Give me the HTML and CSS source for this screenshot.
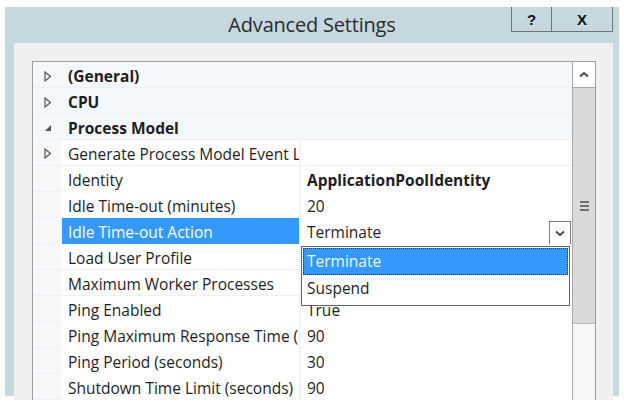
FILE: index.html
```html
<!DOCTYPE html>
<html>
<head>
<meta charset="utf-8">
<link rel="stylesheet" href="styles.css">
</head>
<body>
<div class="window">
  <div class="titlebar">
    <div class="title">Advanced Settings</div>
    <div class="tbuttons">
      <div class="tbtn help">?</div>
      <div class="tbtn close">X</div>
    </div>
  </div>
  <div class="panel">
    <div class="grid">
      <div class="rows">
        <div class="row cat"><span class="exp"><svg width="8" height="11" viewBox="0 0 8 11"><path d="M1 1 L6.5 5.5 L1 10 Z" fill="none" stroke="#555" stroke-width="1.2"/></svg></span><span class="catname">(General)</span></div>
        <div class="row cat"><span class="exp"><svg width="8" height="11" viewBox="0 0 8 11"><path d="M1 1 L6.5 5.5 L1 10 Z" fill="none" stroke="#555" stroke-width="1.2"/></svg></span><span class="catname">CPU</span></div>
        <div class="row cat"><span class="exp"><svg width="8" height="8" viewBox="0 0 8 8"><path d="M7 1 L7 7 L1 7 Z" fill="#555"/></svg></span><span class="catname">Process Model</span></div>
        <div class="row"><span class="exp"><svg width="8" height="11" viewBox="0 0 8 11"><path d="M1 1 L6.5 5.5 L1 10 Z" fill="none" stroke="#555" stroke-width="1.2"/></svg></span><span class="name">Generate Process Model Event L</span><span class="val"></span></div>
        <div class="row"><span class="exp"></span><span class="name">Identity</span><span class="val bold">ApplicationPoolIdentity</span></div>
        <div class="row"><span class="exp"></span><span class="name">Idle Time-out (minutes)</span><span class="val">20</span></div>
        <div class="row"><span class="exp"></span><span class="name sel">Idle Time-out Action</span><span class="val edit">Terminate<span class="ddbtn"><svg width="10" height="7" viewBox="0 0 10 7"><path d="M1 1.5 L5 5 L9 1.5" fill="none" stroke="#444" stroke-width="2"/></svg></span></span></div>
        <div class="row"><span class="exp"></span><span class="name">Load User Profile</span><span class="val"></span></div>
        <div class="row"><span class="exp"></span><span class="name">Maximum Worker Processes</span><span class="val"></span></div>
        <div class="row"><span class="exp"></span><span class="name">Ping Enabled</span><span class="val">True</span></div>
        <div class="row"><span class="exp"></span><span class="name">Ping Maximum Response Time (</span><span class="val">90</span></div>
        <div class="row"><span class="exp"></span><span class="name">Ping Period (seconds)</span><span class="val">30</span></div>
        <div class="row"><span class="exp"></span><span class="name">Shutdown Time Limit (seconds)</span><span class="val">90</span></div>
      </div>
      <div class="scrollbar">
        <div class="sbup"><svg width="10" height="7" viewBox="0 0 10 7"><path d="M1 5.5 L5 2 L9 5.5" fill="none" stroke="#444" stroke-width="2"/></svg></div>
        <div class="thumb"><span class="grip"></span><span class="grip"></span><span class="grip"></span></div>
        <div class="track"></div>
      </div>
      <div class="dropdown">
        <div class="opt active">Terminate</div>
        <div class="opt">Suspend</div>
      </div>
    </div>
  </div>
</div>
</body>
</html>
```
FILE: styles.css
```css
html, body {
  margin: 0;
  padding: 0;
  background: #ffffff;
}
body {
  width: 624px;
  height: 402px;
  overflow: hidden;
  font-family: "Open Sans", "Noto Sans", "DejaVu Sans", sans-serif;
}
.window {
  margin: 7px 0 0 5px;
  width: 614px;
  height: 389px;
  background: #c5d8de;
  display: flex;
  flex-direction: column;
}
.titlebar {
  height: 37px;
  position: relative;
  display: flex;
  justify-content: center;
}
.title {
  font-size: 20px;
  color: #2b2b2b;
  line-height: 36px;
  letter-spacing: -0.2px;
}
.tbuttons {
  position: absolute;
  right: 6px;
  top: 0;
  display: flex;
}
.tbtn {
  height: 24px;
  border: 1px solid #6f7477;
  border-top: none;
  display: flex;
  align-items: center;
  justify-content: center;
  font-family: "Liberation Sans", Arial, sans-serif;
  font-weight: bold;
  font-size: 15px;
  color: #111;
}
.help {
  width: 39px;
}
.close {
  width: 60px;
  border-left: none;
}
.panel {
  flex: 1;
  margin: 0 6px 0 9px;
  background: #f0f0f0;
  padding: 18px 17px 0 18px;
  display: flex;
  flex-direction: column;
}
.grid {
  flex: 1;
  position: relative;
  border: 1px solid #9a9ea3;
  border-bottom: none;
  display: flex;
  overflow: hidden;
  background: #ffffff;
}
.rows {
  width: 539px;
  display: flex;
  flex-direction: column;
}
.row {
  height: 25px;
  flex: none;
  border-bottom: 1px solid #eef0f3;
  display: grid;
  grid-template-columns: 29px 239px 1fr;
  font-size: 15.5px;
  color: #1e1e1e;
  line-height: 25px;
  background: #f6f8fa;
}
.row.cat {
  background: #f4f7fb;
  grid-template-columns: 29px 1fr;
}
.exp {
  display: flex;
  align-items: center;
  justify-content: center;
  padding-left: 1px;
  padding-top: 1px;
}
.catname {
  font-weight: bold;
  padding-left: 6px;
  padding-top: 2px;
  box-sizing: border-box;
}
.name {
  background: #ffffff;
  padding-left: 6px;
  padding-top: 2px;
  white-space: nowrap;
  overflow: hidden;
  border-right: 2px solid #f2f3f5;
}
.name.sel {
  background: #3399ff;
  color: #ffffff;
}
.val {
  background: #ffffff;
  padding-left: 6px;
  padding-top: 2px;
  white-space: nowrap;
  position: relative;
}
.bold {
  font-weight: bold;
}
.ddbtn {
  position: absolute;
  right: 1px;
  top: 3px;
  width: 22px;
  height: 24px;
  border: 1px solid #7a7a7a;
  box-sizing: border-box;
  background: #fff;
  display: flex;
  align-items: center;
  justify-content: center;
}
.scrollbar {
  width: 22px;
  border-left: 1px solid #a8a8a8;
  display: flex;
  flex-direction: column;
  background: #f0f0f0;
}
.sbup {
  height: 25px;
  background: #ffffff;
  border-bottom: 1px solid #a8a8a8;
  display: flex;
  align-items: center;
  justify-content: center;
}
.thumb {
  height: 235px;
  background: #dadada;
  border-bottom: 1px solid #bcbcbc;
  display: flex;
  flex-direction: column;
  align-items: center;
  justify-content: center;
  gap: 2px;
}
.grip {
  width: 9px;
  height: 2px;
  background: #6e6e6e;
}
.track {
  flex: 1;
  background: #f7f7f7;
}
.dropdown {
  position: absolute;
  left: 268px;
  top: 184px;
  width: 269px;
  height: 60px;
  box-sizing: border-box;
  border: 1px solid #646464;
  background: #ffffff;
  padding: 1px 1px;
  font-size: 15.5px;
}
.opt {
  height: 25px;
  line-height: 25px;
  padding-left: 3px;
  color: #1e1e1e;
  border: 1px dotted transparent;
}
.opt.active {
  background: #3399ff;
  color: #f2f7ff;
  border: 1px dotted #0a2a60;
}
```
